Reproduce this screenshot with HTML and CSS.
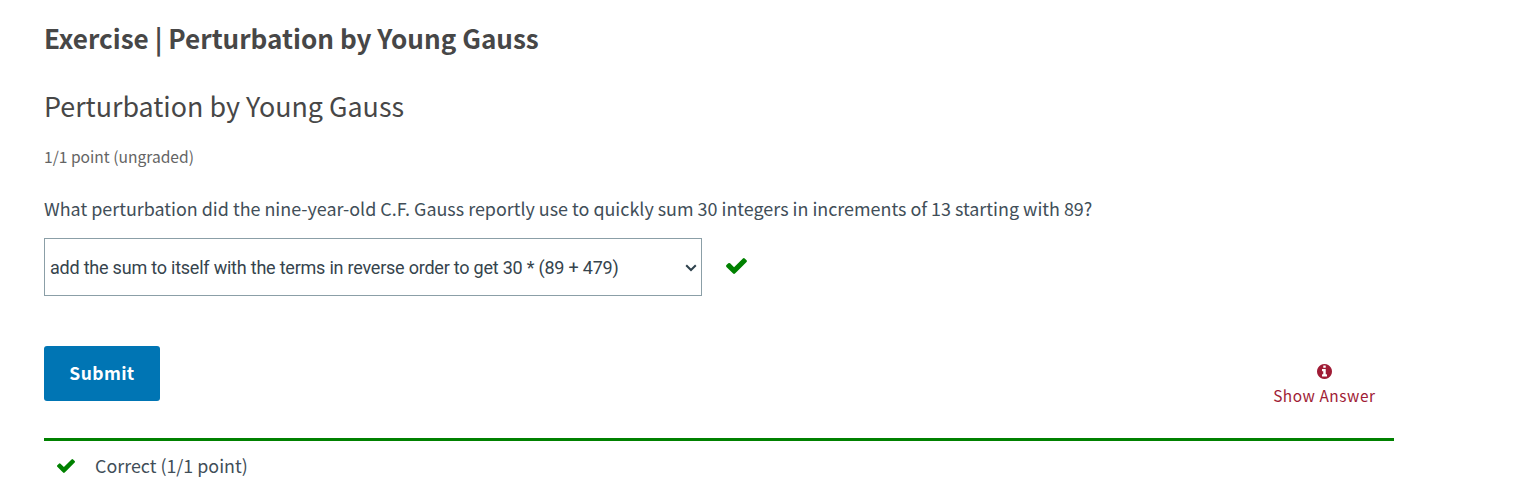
FILE: index.html
```html
<!DOCTYPE html>
<html lang="en">
<head>
<meta charset="utf-8">
<title>Exercise | Perturbation by Young Gauss</title>
<link rel="stylesheet" href="styles.css">
</head>
<body>
<main class="problem">
  <h2 class="unit-title"><span>Exercise | Perturbation by Young Gauss</span></h2>
  <h3 class="problem-title"><span>Perturbation by Young Gauss</span></h3>
  <div class="progress"><span>1/1 point (ungraded)</span></div>
  <p class="question"><span>What perturbation did the nine-year-old C.F. Gauss reportly use to quickly sum 30 integers in increments of 13 starting with 89?</span></p>
  <div class="answer">
    <div class="select" role="combobox">
      <span class="select-text">add the sum to itself with the terms in reverse order to get 30 * (89 + 479)</span>
      <svg class="chevron" viewBox="0 0 12 8"><path d="M1.2 1.2 6 6 10.800 1.200" fill="none" stroke="#2f424d" stroke-width="2"/></svg>
    </div>
    <svg class="check" viewBox="121 334 1550 1188"><path d="M1671 566q0 40-28 68l-724 724-136 136q-28 28-68 28t-68-28l-136-136-362-362q-28-28-28-68t28-68l136-136q28-28 68-28t68 28l294 295 656-657q28-28 68-28t68 28l136 136q28 28 28 68z"/></svg>
  </div>
  <div class="actions">
    <button class="submit" type="button">Submit</button>
    <div class="show">
      <svg class="info" viewBox="0 0 1536 1536"><path d="M1024 1248v-160q0-14-9-23t-23-9h-96V544q0-14-9-23t-23-9H544q-14 0-23 9t-9 23v160q0 14 9 23t23 9h96v320h-96q-14 0-23 9t-9 23v160q0 14 9 23t23 9h448q14 0 23-9t9-23zM896 352V192q0-14-9-23t-23-9H672q-14 0-23 9t-9 23v160q0 14 9 23t23 9h192q14 0 23-9t9-23zM1536 768q0 209-103 385.500T1153.500 1433 768 1536t-385.500-103T103 1153.500 0 768t103-385.500T382.500 103 768 0t385.500 103T1433 382.500 1536 768z"/></svg>
      <span class="show-text">Show Answer</span>
    </div>
  </div>
  <div class="status">
    <svg class="check-small" viewBox="121 334 1550 1188"><path d="M1671 566q0 40-28 68l-724 724-136 136q-28 28-68 28t-68-28l-136-136-362-362q-28-28-28-68t28-68l136-136q28-28 68-28t68 28l294 295 656-657q28-28 68-28t68 28l136 136q28 28 28 68z"/></svg>
    <span>Correct (1/1 point)</span>
  </div>
</main>
</body>
</html>
```
FILE: styles.css
```css
* { box-sizing: border-box; }
body {
  margin: 0;
  background: #fff;
  color: #414e58;
  font-family: "Noto Sans CJK SC", "Noto Sans", sans-serif;
  white-space: nowrap;
}
.problem { width: 1350px; margin-left: 44px; padding-top: 18px; }
.unit-title { margin: 0; font-size: 26.100px; line-height: 40px; font-weight: 600; color: #474747; }
.problem-title { margin: 28px 0 0; font-size: 26.850px; line-height: 40px; font-weight: 400; color: #474747; }
.progress { margin-top: 18px; font-size: 15.600px; line-height: 24px; color: #646464; }
.question { margin: 26px 0 0; font-size: 17.910px; line-height: 28px; }
.answer { display: flex; align-items: center; gap: 24px; margin-top: 16px; }
.select {
  display: flex; align-items: center; justify-content: space-between;
  width: 658px; height: 58px; padding: 2px 4px 0 5px;
  border: 1px solid #8b9fa7; color: #36444d;
  font: 18px/24px Roboto, sans-serif;
  letter-spacing: -.22px;
}
.chevron { width: 12px; height: 8px; }
.check { width: 21px; height: 16px; margin-bottom: 3px; fill: #008100; }
.actions { display: flex; justify-content: space-between; margin-top: 50px; height: 55px; }
.submit {
  width: 116px; height: 55px; padding: 0 0 2px; border: 0; border-radius: 3px;
  background: #0075b4; color: #fff;
  font: 700 17.500px/53px "Noto Sans CJK SC", sans-serif;
  letter-spacing: .4px;
}
.show { display: flex; flex-direction: column; align-items: center; padding: 18px 18.500px 0 0; color: #a01c36; }
.info { flex: none; width: 15px; height: 15px; fill: #a01c36; }
.show-text { margin-top: 4px; font-size: 15.400px; line-height: 24px; letter-spacing: .55px; }
.status {
  display: flex; align-items: flex-start; gap: 20px;
  margin-top: 37px; padding: 10px 0 0 13px;
  border-top: 3px solid #008100;
  font-size: 17.870px; line-height: 28px;
}
.check-small { width: 18px; height: 14px; margin-top: 8px; fill: #008100; }
```
